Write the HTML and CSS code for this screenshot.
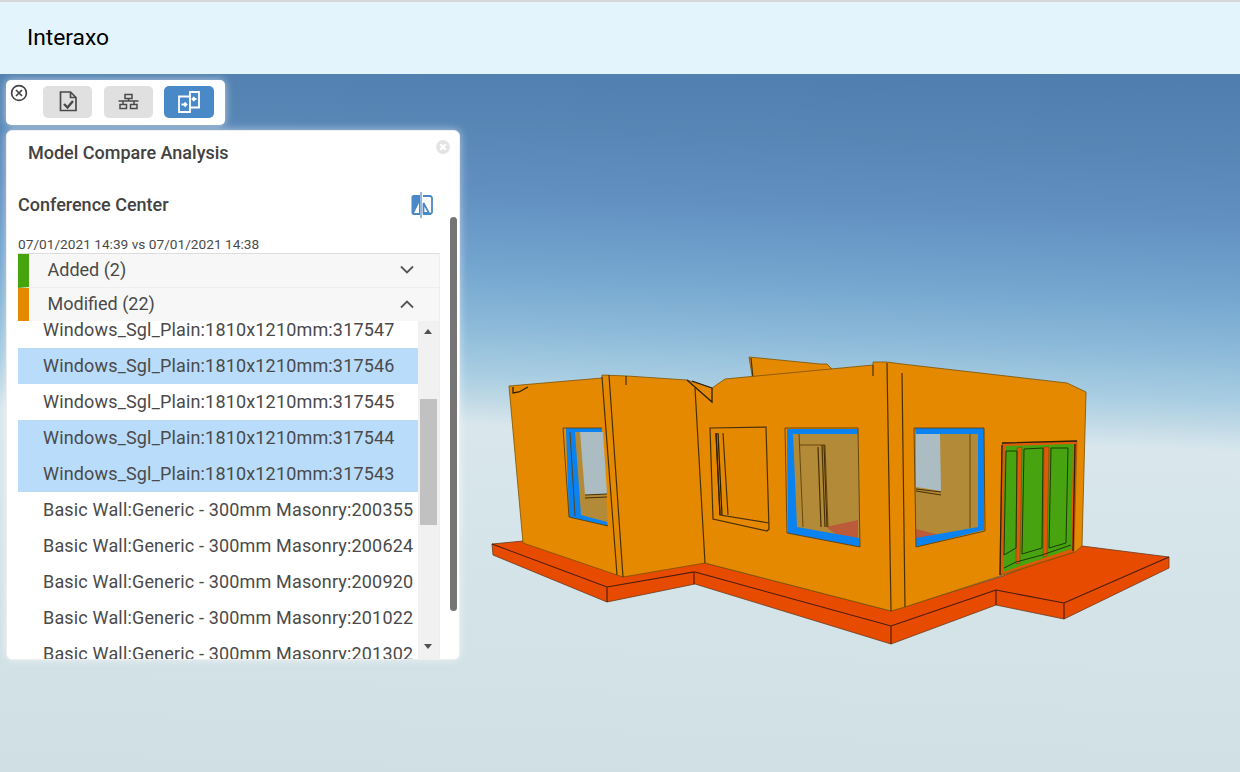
FILE: index.html
```html
<!DOCTYPE html>
<html lang="en">
<head>
<meta charset="utf-8">
<title>Interaxo</title>
<link rel="stylesheet" href="styles.css">
</head>
<body>
<header class="app-header"><span class="brand">Interaxo</span></header>
<main class="viewer">
  <svg class="model" viewBox="0 74 1240 698" aria-label="3D model">
    <!-- slab -->
    <path class="slab" d="M492 544L523 541L705 563L891 611L1003 576L1082 546L1169 557V568L1064 619L996 605L891 644L695 584L607 602L493 555Z"/>
    <path class="edge-dark" d="M492 544L607 587L694 572V584M607 587V602M695 572L891 626L996 590V605M891 626V644M996 590L1064 603L1169 557M1064 603V619"/>
    <!-- back wall -->
    <path class="wall" d="M749 357L820 364L827 364L835 372L753 381Z"/>
    <path class="line" d="M751 358L753 378"/>
    <!-- walls -->
    <path class="wall" d="M509 386L602 378V375L627 376L687 380L712 388L725 379L873 365V362L887 362L902 364L1067 383L1086 392L1082 546L1075 552L1003 575L905 607L891 611L705 563L623 577L617 575L523 543Z"/>
    <path class="line" d="M602 377L617 575M609 375L623 577M695 388L705 563M887 363L891 611M902 373L905 607M873 365V376M626 376V385"/>
    <path class="line-strong" d="M513 387V393L519 392L528 387M687 380L712 402V388M692 381L712 388"/>

    <!-- left window -->
    <path class="interior" d="M566 428H602L608 526L569 517Z"/>
    <path class="sky" d="M580 432H603L607 494L585 495Z"/>
    <path class="line" d="M585 495L607 494M585 498L607 497"/>
    <path class="glass" d="M566 428H602V432H575L581 515L607 522L608 526L569 517Z"/>
    <path class="line-thin" d="M563 428H602M563 428L569 517L608 526M570 432L575 516"/>

    <!-- blank window -->
    <path class="line" d="M710 428L766 427L769 529L767 531L713 519ZM716 433L720 515L769 523M723 433L728 515"/>
    <path class="line-strong" d="M716 433L720 515M718 433L722 515"/>

    <!-- middle window -->
    <path class="interior" d="M787 429H858L860 546L788 534Z"/>
    <path class="floor" d="M826 527L858 520V538L838 536Z"/>
    <path class="line-thin" d="M799 433L803 527M800 445H825L828 527"/>
    <path class="line" d="M818 447L821 527M822 445L825 527M824 445L827 527"/>
    <path class="glass" d="M787 429H858V434H793L797 527L859 538L860 547L788 533Z"/>
    <path class="line-thin" d="M785 428H858L860 547L787 533Z"/>

    <!-- right window -->
    <path class="interior" d="M915 430H980V528L916 545Z"/>
    <path class="sky" d="M916 434H940L941 491L916 487Z"/>
    <path class="floor" d="M916 529L940 535L916 539Z"/>
    <path class="line" d="M916 491L941 495M916 489L941 492"/>
    <path class="line-thin" d="M970 433V528"/>
    <path class="glass" d="M915 428H984V530L916 547V538L978 527V434H916Z"/>
    <path class="line-thin" d="M914 428H984L985 531L916 547Z"/>

    <!-- door -->
    <path class="frame" d="M1002 443L1077 441L1074 552L1000 575Z"/>
    <path class="door" d="M1005 446L1073 444L1071 549L1003 572Z"/>
    <path class="frame" d="M1017 448L1022 447L1020 563L1016 564ZM1044 447L1049 447L1047 556L1043 557Z"/>
    <path class="line-door" d="M1006 451H1017L1016 548L1004 555ZM1024 449L1043 448L1042 548L1022 554ZM1051 448H1068L1066 543L1049 548ZM1004 568L1016 562L1042 555L1071 545"/>
    <path class="line-strong" d="M1002 443L1077 441M1075 444L1073 551M1002 445L1000 575"/>
  </svg>

  <nav class="toolbar">
    <button class="tool-close" aria-label="Close">
      <svg viewBox="0 0 18 18" class="icon-close"><circle cx="9" cy="9" r="7.400"/><path d="M6 6L12 12M12 6L6 12"/></svg>
    </button>
    <button class="tool">
      <svg viewBox="0 0 20 24" class="icon-doc"><path d="M2.500 2H12.500L18 7.500V20.500H2.500ZM12.500 2V7.500H18"/><path class="icon-check" d="M6 14L9.500 17.500L15 11"/></svg>
    </button>
    <button class="tool">
      <svg viewBox="0.500 0 24 20" class="icon-tool"><path d="M8.500 2.500H15.500V6.500H8.500ZM12 6.500V9M2 9H22M6.500 9V12.500M17.500 9V12.500M3.500 12.500H10V16.500H3.500ZM14 12.500H20.500V16.500H14Z"/></svg>
    </button>
    <button class="tool tool-active">
      <svg viewBox="0 0 24 24" class="icon-compare"><path d="M2 6.500H13V22H2ZM13 2H22V17.500H13ZM13 6.500V17.500M4.500 14.500H9.500M7.500 12.500L9.500 14.500L7.500 16.500M19.500 9H15.500M17.500 7L15.500 9L17.500 11"/></svg>
    </button>
  </nav>

  <section class="panel">
    <h1 class="panel-title">Model Compare Analysis</h1>
    <button class="panel-close" aria-label="Close">
      <svg viewBox="0 0 16 16"><circle cx="8" cy="8" r="8"/><path d="M5.200 5.200L10.800 10.800M10.800 5.200L5.200 10.800"/></svg>
    </button>
    <div class="scrollbar-outer"></div>
    <div class="panel-body">
      <div class="project-row">
        <h2 class="project-name">Conference Center</h2>
        <svg class="swap-icon" viewBox="0 0 24 26"><path class="swap-fill" d="M10 3H3L1.500 4.500V21.500L3 23H10ZM4 21H9V11Z"/><path class="swap-line" d="M11 0V26"/><path class="swap-outline" d="M13 4H20.500L22 5.500V20.500L20.500 22H13M13.500 11V21H19Z"/></svg>
      </div>
      <p class="dates">07/01/2021 14:39 vs 07/01/2021 14:38</p>
      <div class="accordion">
        <div class="acc-head acc-added">
          <span class="acc-label">Added (2)</span>
          <svg class="chevron" viewBox="0 0 16 10"><path d="M2 1.500L8 7.500L14 1.500"/></svg>
        </div>
        <div class="acc-head acc-modified">
          <span class="acc-label">Modified (22)</span>
          <svg class="chevron" viewBox="0 0 16 10"><path d="M2 8.500L8 2.500L14 8.500"/></svg>
        </div>
        <div class="list-wrap">
          <ul class="list">
            <li>Windows_Sgl_Plain:1810x1210mm:317547</li>
            <li class="selected">Windows_Sgl_Plain:1810x1210mm:317546</li>
            <li>Windows_Sgl_Plain:1810x1210mm:317545</li>
            <li class="selected">Windows_Sgl_Plain:1810x1210mm:317544</li>
            <li class="selected">Windows_Sgl_Plain:1810x1210mm:317543</li>
            <li>Basic Wall:Generic - 300mm Masonry:200355</li>
            <li>Basic Wall:Generic - 300mm Masonry:200624</li>
            <li>Basic Wall:Generic - 300mm Masonry:200920</li>
            <li>Basic Wall:Generic - 300mm Masonry:201022</li>
            <li>Basic Wall:Generic - 300mm Masonry:201302</li>
          </ul>
          <div class="track">
            <span class="arrow arrow-up"></span>
            <span class="thumb"></span>
            <span class="arrow arrow-down"></span>
          </div>
        </div>
        <div class="acc-next"></div>
      </div>
    </div>
  </section>
</main>
</body>
</html>
```
FILE: styles.css
```css
* { box-sizing: border-box; }
html, body { margin: 0; height: 100%; overflow: hidden; }
body {
  display: flex;
  flex-direction: column;
  font-family: Roboto, "Liberation Sans", sans-serif;
  color: #424242;
}
.app-header {
  flex: 0 0 74px;
  display: flex;
  align-items: center;
  padding: 0 0 2px 27px;
  background: #e4f4fc;
  border-top: 2px solid #d4d6d8;
}
.brand { font-size: 22.800px; color: #000; }

.viewer {
  position: relative;
  flex: 1;
  background: linear-gradient(182deg, #4f7dad 0, #5786b5 10%, #6291c1 20%, #74a6cf 30%, #8ab8d8 37%, #a8cde2 44%, #bcd7e5 47%, #d9e7ed 51%, #d3e3e8 75%, #cfdfe3 100%);
}
.model { display: block; width: 100%; height: 100%; }
.slab { fill: #e64b00; stroke: #6b3a1c; stroke-width: .8; }
.edge-dark { fill: none; stroke: #4a1c05; stroke-width: 1.100; }
.wall { fill: #e58a00; stroke: #7b5200; stroke-width: .8; }
.line { fill: none; stroke: #4a3005; stroke-width: 1.200; }
.line-thin { fill: none; stroke: #5e3f08; stroke-width: .9; }
.line-strong { fill: none; stroke: #2e2005; stroke-width: 1.300; }
.line-door { fill: none; stroke: #1f3a05; stroke-width: 1; }
.interior { fill: #b38a38; }
.sky { fill: #abbcc2; }
.floor { fill: #bb5b3a; }
.glass { fill: #0a82f0; }
.door { fill: #47a30f; }
.frame { fill: #dc5a08; stroke: #6a340a; stroke-width: .4; }

.toolbar {
  position: absolute;
  left: 6px;
  top: 6px;
  width: 219px;
  height: 45px;
  display: flex;
  align-items: center;
  gap: 12px;
  padding: 0 0 1px 37px;
  background: #fff;
  border-radius: 5px;
  box-shadow: 0 0 8px rgba(255, 255, 255, .6);
}
button { border: 0; padding: 0; background: none; display: flex; align-items: center; justify-content: center; }
.tool-close { position: absolute; left: 4px; top: 4px; width: 18px; height: 18px; }
.icon-close { width: 18px; height: 18px; fill: none; stroke: #444; stroke-width: 1.700; }
.tool { width: 49px; height: 32px; background: #e0e0e0; border-radius: 5px; }
.tool-active { width: 50px; margin-left: -1px; background: #4a89c8; }
.icon-doc { width: 20px; height: 24px; fill: none; stroke: #4a4a4a; stroke-width: 1.700; }
.icon-tool { width: 24px; height: 24px; fill: none; stroke: #4a4a4a; stroke-width: 1.500; }
.icon-check { stroke-width: 2.400; }
.icon-compare { width: 24px; height: 24px; fill: none; stroke: #fff; stroke-width: 1.800; }

.panel {
  position: absolute;
  left: 6px;
  top: 56px;
  width: 454px;
  height: 530px;
  background: #fff;
  border: 1px solid #eee;
  border-radius: 6px;
  overflow: hidden;
  box-shadow: 0 0 8px rgba(255, 255, 255, .55);
}
.panel-title { margin: 0; padding: 11px 0 0 21px; font-size: 18px; line-height: 22px; font-weight: 500; color: #424242; }
.panel-close { position: absolute; right: 8px; top: 8px; width: 16px; height: 16px; }
.panel-close svg { width: 16px; height: 16px; fill: #e3e3e3; stroke: #fff; stroke-width: 2.200; }
.scrollbar-outer { position: absolute; right: 2px; top: 86px; width: 7px; height: 394px; background: #757575; border-radius: 4px; }
.panel-body { padding: 0 19px 0 11px; }
.project-row { display: flex; justify-content: space-between; align-items: center; margin-top: 23px; height: 36px; padding-right: 6px; }
.project-name { margin: 0; font-size: 18px; line-height: 22px; font-weight: 500; color: #424242; }
.swap-icon { width: 24px; height: 26px; fill: none; }
.swap-fill { fill: #4a89c8; fill-rule: evenodd; }
.swap-line { stroke: #4a89c8; stroke-width: 1.200; }
.swap-outline { stroke: #4a89c8; stroke-width: 1.800; }
.dates { margin: 13px 0 1px; font-size: 13.700px; line-height: 16px; color: #4a4a4a; }

.accordion { width: 422px; border-top: 1px solid #ddd; border-right: 1px solid #eee; }
.acc-head {
  display: flex;
  align-items: center;
  justify-content: space-between;
  height: 34px;
  padding: 0 24px 2px 18.500px;
  background: #f7f7f7;
  border-left: 11px solid;
  font-size: 18px;
}
.acc-added { height: 34px; border-left-color: #46a40d; border-bottom: 1px solid #eee; }
.acc-modified { height: 33px; border-left-color: #e58a00; }
.acc-label { color: #4a4a4a; }
.chevron { width: 16px; height: 10px; fill: none; stroke: #555; stroke-width: 1.800; }
.list-wrap { display: flex; height: 338px; overflow: hidden; }
.list { flex: 1; margin: -9px 0 0; padding: 0; list-style: none; }
.list li { height: 36px; padding-left: 25px; font-size: 18px; letter-spacing: .165px; line-height: 36px; color: #4a4a4a; white-space: nowrap; }
.list li.selected { background: #b8dcfa; }
.track { position: relative; flex: 0 0 21px; background: #f1f1f1; }
.thumb { position: absolute; left: 2px; top: 78px; width: 17px; height: 126px; background: #c1c1c1; }
.arrow { position: absolute; left: 6px; width: 0; height: 0; border-left: 4px solid transparent; border-right: 4px solid transparent; }
.arrow-up { top: 8px; border-bottom: 5px solid #505050; }
.arrow-down { bottom: 10px; border-top: 5px solid #505050; }
.acc-next { height: 4px; width: 11px; background: #e64b00; }
```
